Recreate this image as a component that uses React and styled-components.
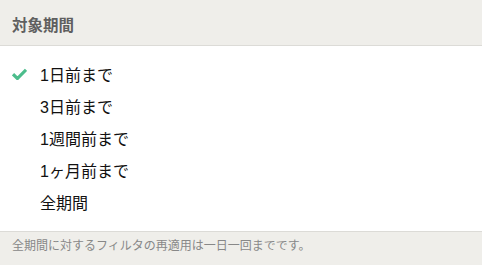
import React from "react";
import styled, { createGlobalStyle } from "styled-components";

const Global = createGlobalStyle`
  body {
    margin: 0;
    background: #fff;
    font-family: "Liberation Sans", Arial, "Noto Sans CJK JP", sans-serif;
  }
`;

const Panel = styled.div`
  width: 482px;
  height: 265px;
  display: flex;
  flex-direction: column;
  background: #fff;
`;

const Header = styled.div`
  height: 46px;
  box-sizing: border-box;
  display: flex;
  align-items: center;
  padding: 2px 12px 0;
  background: #efeeea;
  border-bottom: 1px solid #dcdbd7;
  font-size: 15.5px;
  font-weight: bold;
  color: #5f5f5f;
`;

const List = styled.ul`
  list-style: none;
  margin: 0;
  padding: 11.5px 0 0;
  flex: 1;
`;

const Item = styled.li`
  height: 32.2px;
  display: flex;
  align-items: center;
  font-size: 16px;
  color: #111;
  cursor: pointer;
`;

const Mark = styled.span`
  width: 40px;
  display: flex;
  justify-content: flex-start;
  padding-left: 12px;
  box-sizing: border-box;
`;

const Footer = styled.div`
  height: 34px;
  box-sizing: border-box;
  padding: 4px 12px 0;
  background: #efeeea;
  border-top: 1px solid #dcdbd7;
  font-size: 12px;
  color: #888;
`;

const Check = () => (
  <svg width="15" height="12" viewBox="0 0 15 12">
    <path d="M1 6.2 L5.4 10.5 L14 1.8" fill="none" stroke="#4cbd8c" strokeWidth="3.2" strokeLinejoin="miter" />
  </svg>
);

const options = ["1日前まで", "3日前まで", "1週間前まで", "1ヶ月前まで", "全期間"];

export default function App() {
  return (
    <>
      <Global />
      <Panel>
        <Header>対象期間</Header>
        <List>
          {options.map((o, i) => (
            <Item key={o}>
              <Mark>{i === 0 && <Check />}</Mark>
              {o}
            </Item>
          ))}
        </List>
        <Footer>全期間に対するフィルタの再適用は一日一回までです。</Footer>
      </Panel>
    </>
  );
}
